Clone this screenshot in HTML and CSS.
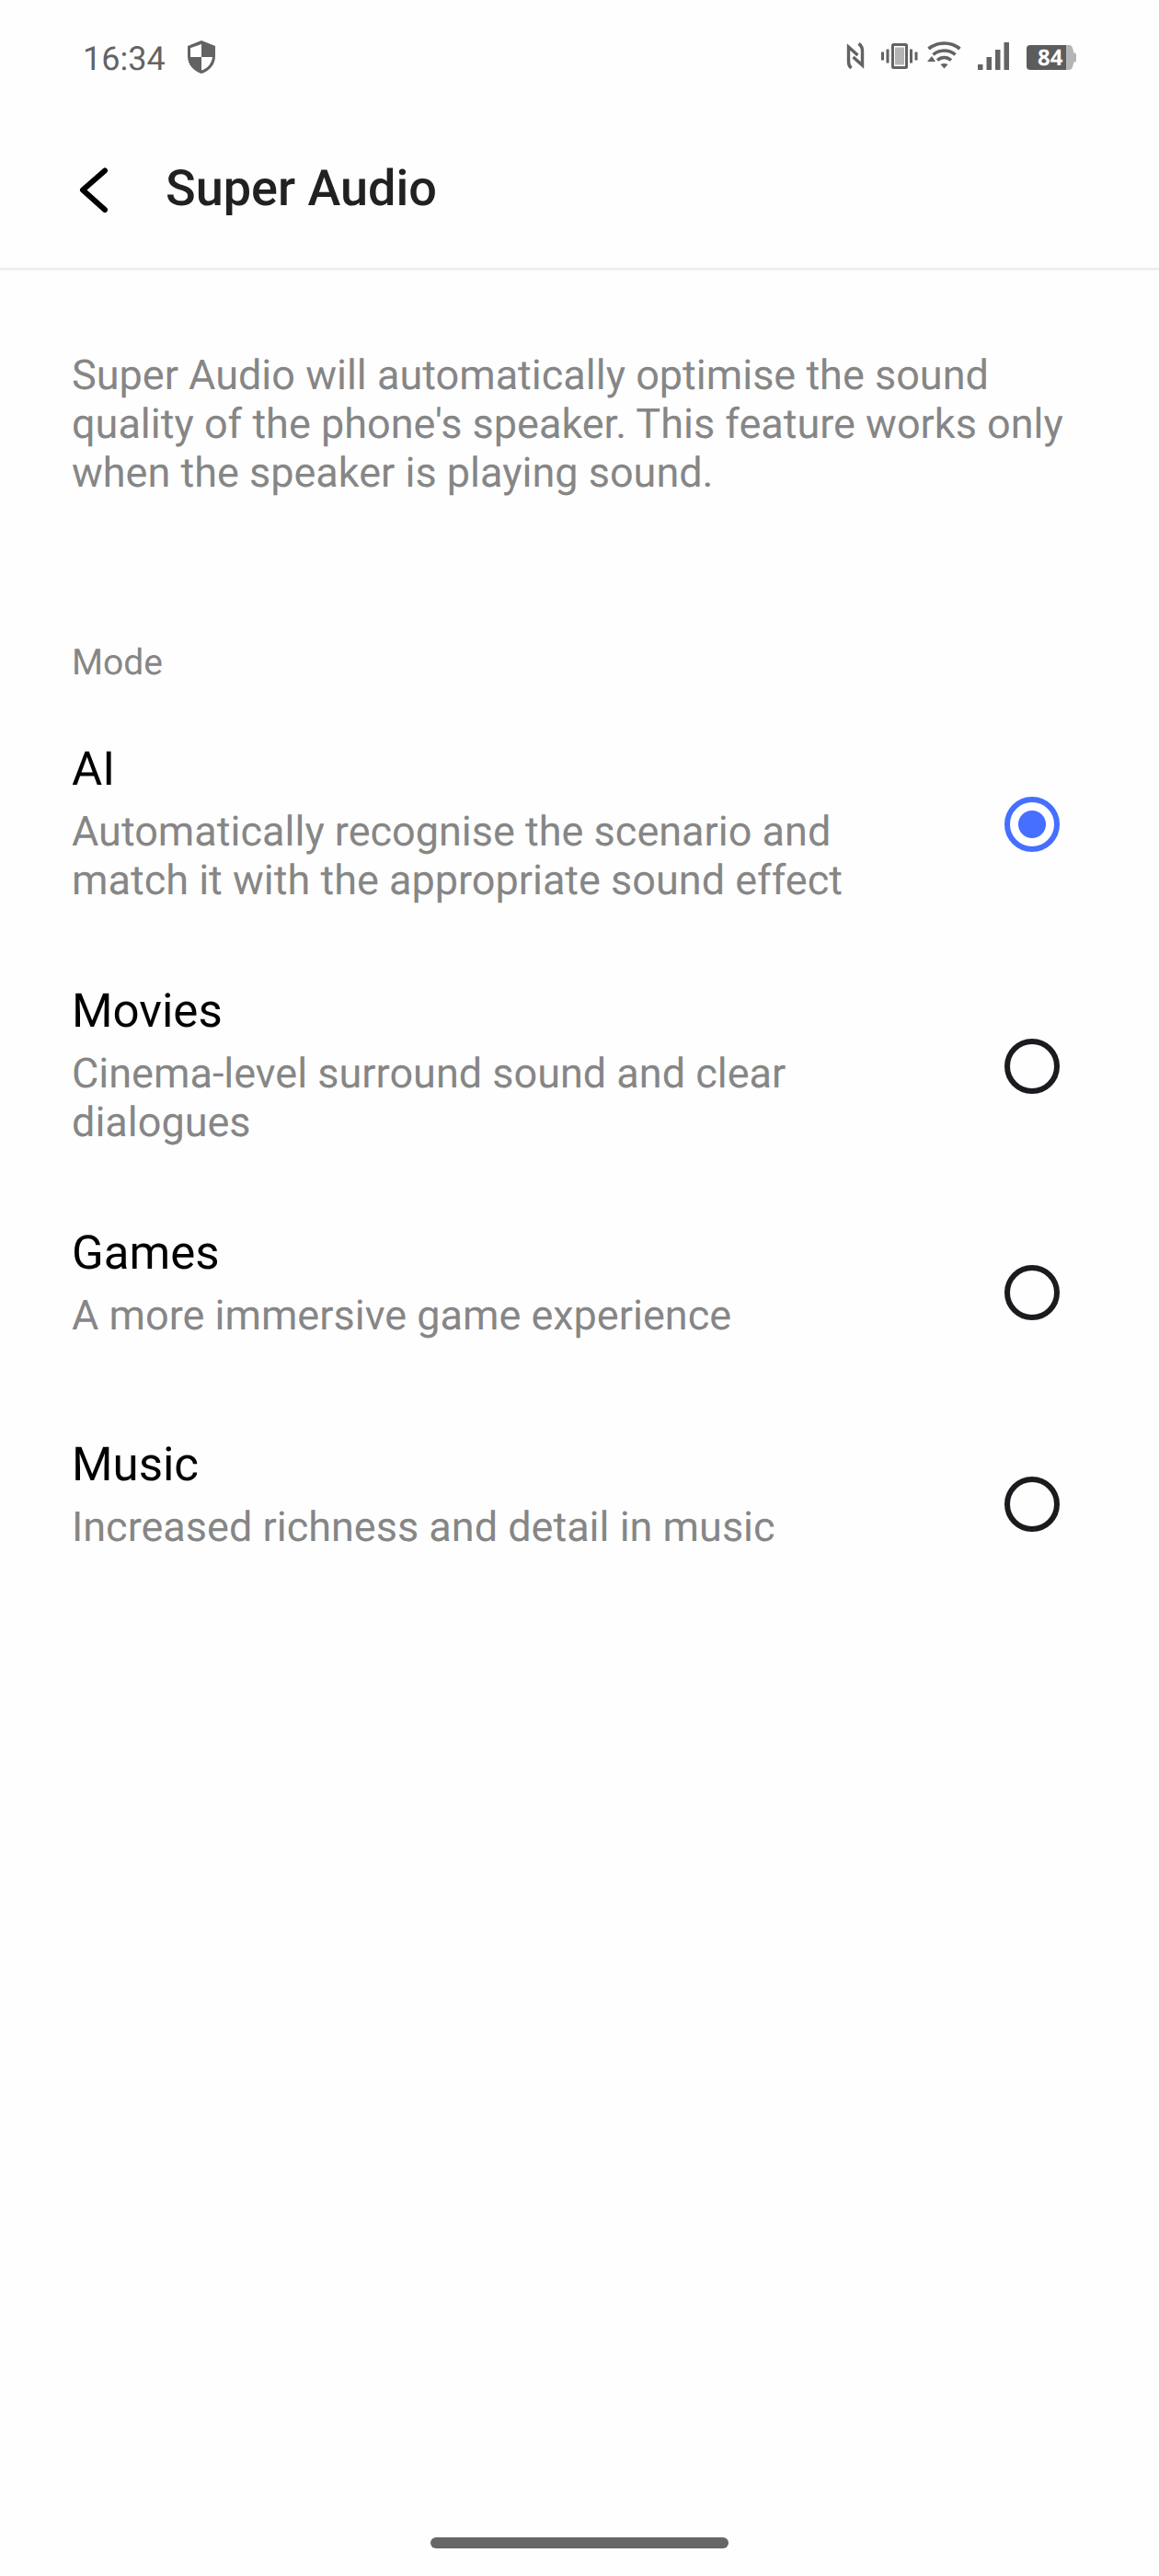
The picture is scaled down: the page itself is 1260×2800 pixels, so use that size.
FILE: index.html
```html
<!doctype html>
<html lang="en">
  <head>
    <meta charset="utf-8">
    <title>Super Audio</title>
    <link rel="stylesheet" href="styles.css">
  </head>
  <body>
    <div class="status-bar">
      <div class="status-left">
        <span class="clock">16:34</span>
        <svg class="icon-shield" width="30" height="36" viewBox="0 0 30 36">
          <path d="M15 0L30 6V17C30 26 24 33 15 36C6 33 0 26 0 17V6Z" fill="#636363"/>
          <path d="M15 4V18H3V8.3Z" fill="#fff"/>
          <path d="M15 18H27C26 25 22 30 15 32.5Z" fill="#fff"/>
        </svg>
      </div>
      <div class="status-right">
        <svg class="icon-nfc" width="20" height="30" viewBox="0 0 20 30" fill="none" stroke="#636363" stroke-width="3.4">
          <path d="M5.5 28C3 26 2.500 24 2.500 21V5L12.500 14"/>
          <path d="M13.500 1.500C17 4 17.500 6 17.500 9V25L7.500 16"/>
        </svg>
        <svg class="icon-vibrate" width="40" height="28" viewBox="0 0 40 28">
          <path d="M0 9.500H3V18.500H0ZM5.500 6.500H8.500V21.500H5.500ZM31 6.500H34V21.500H31ZM36.500 9.500H39.500V18.500H36.500Z" fill="#636363"/>
          <rect x="12.500" y="1.500" width="15" height="25" rx="1" fill="#fff" stroke="#636363" stroke-width="3"/>
          <rect x="15" y="4.500" width="10" height="19" fill="#b5b5b5"/>
        </svg>
        <svg class="icon-wifi" width="37" height="30" viewBox="0 0 37 30" fill="none" stroke="#636363" stroke-width="3.600">
          <path d="M1.500 8C11 0 26 0 35.500 8"/>
          <path d="M6.500 14.500C13 8.500 24 8.500 30.500 14.500"/>
          <path d="M11 20.500C15.500 16.500 21.500 16.500 26 20.500"/>
          <path d="M14.500 25Q18.500 23 22.500 25L18.500 29.500Z" fill="#636363" stroke="none"/>
          <path d="M0 22L5 16L9 22Z" fill="#636363" stroke="none"/>
        </svg>
        <svg class="icon-signal" width="34" height="30" viewBox="0 0 34 30" fill="#636363">
          <path d="M0 24H5.500V30H0ZM9.500 16H15V30H9.500ZM19 8H24.500V30H19ZM28.500 0H34V30H28.500Z"/>
        </svg>
        <div class="battery">
          <svg width="54" height="27" viewBox="0 0 54 27">
            <path d="M43 0H47Q49 0 50 3L51.500 8.500H52.500Q54 8.500 54 10V17Q54 18.500 52.500 18.500H51.500L50 24Q49 27 46 27H43Z" fill="#b5b5b5"/>
            <path d="M4 0H43V27H4Q0 27 0 23V4Q0 0 4 0Z" fill="#5c5c5c"/>
          </svg>
          <span class="battery-level">84</span>
        </div>
      </div>
    </div>

    <header class="header">
      <svg class="icon-back" width="32" height="50" viewBox="0 0 32 50">
        <path d="M28 3.500L4 24.500L28 46" fill="none" stroke="#000" stroke-width="6" stroke-linecap="round" stroke-linejoin="round"/>
      </svg>
      <h1 class="title">Super Audio</h1>
    </header>

    <main class="content">
      <p class="intro">Super Audio will automatically optimise the sound<br>quality of the phone's speaker. This feature works only<br>when the speaker is playing sound.</p>

      <h2 class="section-title">Mode</h2>

      <label class="option">
        <span class="option-text">
          <span class="option-name">AI</span>
          <span class="option-desc">Automatically recognise the scenario and match it with the appropriate sound effect</span>
        </span>
        <input class="radio" type="radio" name="mode" checked>
      </label>
      <label class="option">
        <span class="option-text">
          <span class="option-name">Movies</span>
          <span class="option-desc">Cinema-level surround sound and clear dialogues</span>
        </span>
        <input class="radio" type="radio" name="mode">
      </label>
      <label class="option">
        <span class="option-text">
          <span class="option-name">Games</span>
          <span class="option-desc">A more immersive game experience</span>
        </span>
        <input class="radio" type="radio" name="mode">
      </label>
      <label class="option">
        <span class="option-text">
          <span class="option-name">Music</span>
          <span class="option-desc">Increased richness and detail in music</span>
        </span>
        <input class="radio" type="radio" name="mode">
      </label>
    </main>

    <div class="nav-handle"></div>
  </body>
</html>
```
FILE: styles.css
```css
* {
  box-sizing: border-box;
  margin: 0;
  padding: 0;
}

body {
  height: 2800px;
  display: flex;
  flex-direction: column;
  font-family: Roboto, 'Liberation Sans', sans-serif;
  text-rendering: geometricPrecision;
  background: #fefefe;
  overflow: hidden;
}

/* Status bar */
.status-bar {
  height: 120px;
  padding: 0 90px;
  display: flex;
  justify-content: space-between;
}

.status-left,
.status-right {
  display: flex;
  align-items: flex-start;
}

.clock {
  width: 90px;
  margin-top: 43px;
  font-size: 36px;
  line-height: 42px;
  color: #636363;
}

.icon-shield {
  margin: 44px 0 0 24px;
}

.icon-nfc {
  margin-top: 46px;
}

.icon-vibrate {
  margin: 47px 0 0 18px;
}

.icon-wifi {
  margin: 45px 0 0 10px;
}

.icon-signal {
  margin: 46px 0 0 18px;
}

.battery {
  position: relative;
  margin: 49px 0 0 19px;
  height: 27px;
}

.battery-level {
  position: absolute;
  left: 12px;
  top: 0;
  font-family: 'Noto Sans', sans-serif;
  font-size: 24px;
  line-height: 27px;
  font-weight: 700;
  color: #fff;
}

/* Header */
.header {
  height: 174px;
  padding: 52px 84px 0;
  display: flex;
  align-items: flex-start;
  border-bottom: 3px solid #efefef;
}

.icon-back {
  margin: 10px 62px 0 2px;
}

.title {
  margin-top: 2px;
  font-size: 54px;
  line-height: 64px;
  font-weight: 500;
  color: #212121;
}

/* Content */
.content {
  flex: 1;
  padding: 87px 78px 0;
}

.intro {
  font-size: 45px;
  line-height: 53px;
  color: #868686;
}

.section-title {
  margin: 157px 0 21px;
  font-size: 39px;
  line-height: 46px;
  font-weight: 400;
  color: #868686;
}

.option {
  min-height: 230px;
  padding: 42px 30px 44px 0;
  display: flex;
  justify-content: space-between;
}

.option-text {
  width: 880px;
}

.option-name {
  display: block;
  font-size: 51px;
  line-height: 62px;
  color: #000;
}

.option-desc {
  display: block;
  margin-top: 9px;
  font-size: 45px;
  line-height: 53px;
  color: #868686;
}

.radio {
  appearance: none;
  align-self: center;
  width: 60px;
  height: 60px;
  margin-top: 2px;
  border: 6px solid #1b1b1f;
  border-radius: 50%;
}

.radio:checked {
  border-color: #456fff;
  background: radial-gradient(circle, #456fff 14.5px, transparent 15.5px);
}

.nav-handle {
  align-self: center;
  width: 324px;
  height: 12px;
  margin-bottom: 30px;
  border-radius: 6px;
  background: #666;
}
```
